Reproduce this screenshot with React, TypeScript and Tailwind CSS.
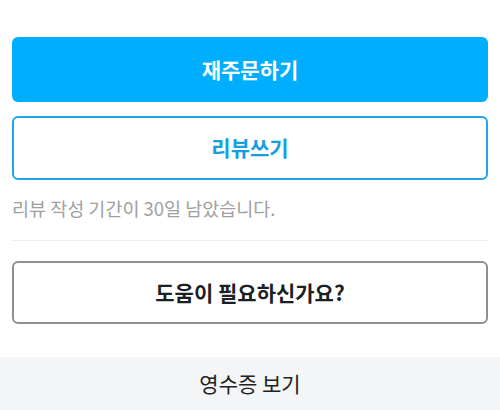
export default function App() {
  const font = { fontFamily: '"Noto Sans CJK KR", "Noto Sans", sans-serif' };
  return (
    <div className="w-[500px] h-[410px] overflow-hidden bg-white" style={font}>
      <div className="px-3 pt-[37px]">
        <button className="flex h-[65px] w-full items-center justify-center rounded-md bg-[#00aeff] text-[21px] font-bold text-white">
          재주문하기
        </button>
        <button className="mt-[14px] flex h-[64px] w-full items-center justify-center rounded-md border-2 border-[#1ea6e6] bg-white text-[21px] font-bold text-[#169fe0]">
          리뷰쓰기
        </button>
        <p className="mt-[17px] text-[18.5px] leading-[22px] text-[#a0a0a0]">
          리뷰 작성 기간이 30일 남았습니다.
        </p>
        <div className="mt-[21px] h-px bg-[#eeeeee]" />
        <button className="mt-[20px] flex h-[63px] w-full items-center justify-center rounded-md border-2 border-[#8d9196] bg-white text-[21px] font-bold text-[#1c1f24]">
          도움이 필요하신가요?
        </button>
      </div>
      <div className="mt-[33px] flex h-[53px] items-center justify-center bg-[#f4f5f7] text-[21px] text-[#222]">
        영수증 보기
      </div>
    </div>
  );
}
